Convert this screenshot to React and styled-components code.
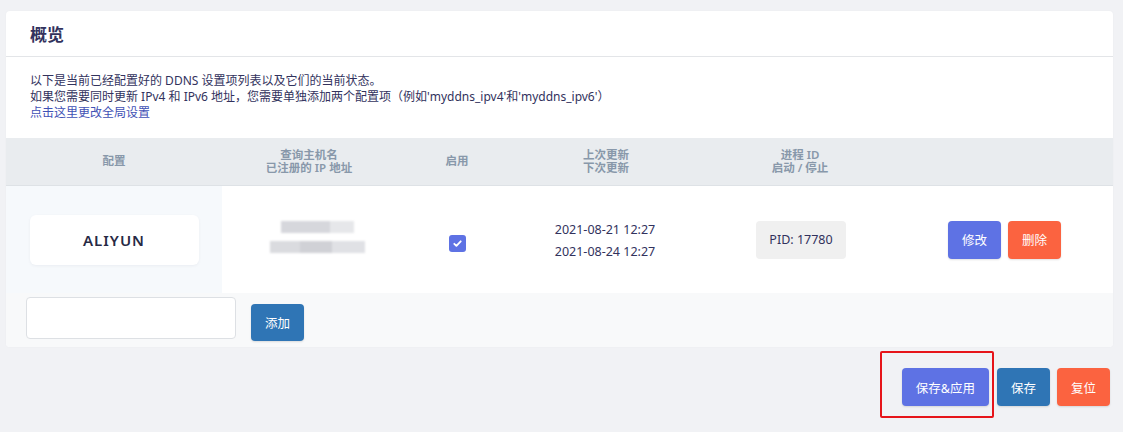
import React from "react";
import styled, { createGlobalStyle } from "styled-components";

const GlobalStyle = createGlobalStyle`
  html, body {
    margin: 0;
    padding: 0;
    background: #f1f2f5;
    font-family: "Noto Sans", "Noto Sans CJK SC", sans-serif;
    color: #32325d;
  }
  * { box-sizing: border-box; }
`;

const Page = styled.div`
  padding: 11px 10px 0 6px;
  width: 1123px;
`;

const Card = styled.div`
  background: #fff;
  border-radius: 4px;
  overflow: hidden;
  box-shadow: 0 0 2px rgba(0, 0, 0, 0.04);
`;

const CardHeader = styled.div`
  height: 46px;
  display: flex;
  align-items: center;
  padding: 0 24px;
  border-bottom: 1px solid #e3e5e8;
`;

const Title = styled.h3`
  margin: 0;
  font-size: 17px;
  font-weight: 700;
  color: #32325d;
`;

const Desc = styled.div`
  padding: 16px 24px 17px;
  font-size: 12px;
  line-height: 16px;
  color: #32325d;
`;

const Link = styled.a`
  color: #3f51b5;
  text-decoration: none;
`;

const Table = styled.div`
  display: grid;
  grid-template-columns: 216px 174px 122px 176px 212px 1fr;
`;

const HeadCell = styled.div`
  height: 48px;
  background: #e9ecef;
  color: #8898aa;
  font-size: 11.5px;
  font-weight: 600;
  line-height: 12.5px;
  display: flex;
  flex-direction: column;
  align-items: center;
  justify-content: center;
  border-bottom: 1px solid #dee2e6;
`;

const Cell = styled.div`
  height: 107px;
  display: flex;
  align-items: center;
  justify-content: center;
  background: ${(p) => (p.$shaded ? "#f6f9fc" : "#fff")};
  flex-direction: ${(p) => (p.$column ? "column" : "row")};
`;

const NameBox = styled.div`
  width: 169px;
  height: 50px;
  background: #fff;
  border-radius: 6px;
  box-shadow: 0 1px 3px rgba(50, 50, 93, 0.06);
  display: flex;
  align-items: center;
  justify-content: center;
  font-size: 15px;
  font-weight: 600;
  letter-spacing: 1px;
  color: #272a45;
`;

const Blurred = styled.div`
  display: flex;
  flex-direction: column;
  align-items: flex-start;
  gap: 8px;
  margin-top: -6px;
  margin-left: 16px;
  filter: blur(1px);
`;

const BlurLine = styled.div`
  display: flex;
  height: 12px;
  margin-left: ${(p) => p.$shift || 0}px;
`;

const BlurSeg = styled.div`
  width: ${(p) => p.$w}px;
  background: ${(p) => p.$c};
`;

const Check = styled.div`
  width: 17px;
  height: 17px;
  border-radius: 3px;
  background: #5e72e4;
  display: flex;
  align-items: center;
  justify-content: center;
  margin-top: 8px;
`;

const DateText = styled.div`
  font-size: 12.5px;
  color: #32325d;
  line-height: 22px;
  margin-left: -2px;
  margin-top: 2px;
`;

const Pid = styled.div`
  width: 90px;
  height: 38px;
  border-radius: 4px;
  background: #f0f0f0;
  display: flex;
  align-items: center;
  justify-content: center;
  font-size: 12.5px;
  color: #32325d;
  margin-left: 2px;
`;

const Actions = styled(Cell)`
  justify-content: flex-start;
  padding-left: 42px;
  gap: 7px;
`;

const colors = {
  primary: "#5e72e4",
  blue: "#2f75b5",
  danger: "#fb6340",
};

const Button = styled.button`
  height: 38px;
  min-width: 53px;
  padding: 0 14px;
  border: none;
  border-radius: 4px;
  background: ${(p) => colors[p.$kind || "primary"]};
  color: #fff;
  font-family: inherit;
  font-size: 12.5px;
  box-shadow: 0 1px 2px rgba(0, 0, 0, 0.12);
  cursor: pointer;
`;

const AddRow = styled.div`
  height: 54px;
  background: #f8f9fa;
  display: flex;
  align-items: center;
  padding: 0 20px;
  gap: 15px;
`;

const Input = styled.input`
  width: 210px;
  height: 42px;
  border: 1px solid #dde0e4;
  border-radius: 4px;
  background: #fff;
  margin-top: -4px;
`;

const AddButton = styled(Button)`
  height: 37px;
  margin-top: 4px;
`;

const Footer = styled.div`
  display: flex;
  justify-content: flex-end;
  align-items: flex-start;
  gap: 7px;
  padding: 21px 3px 26px 0;
`;

const Highlight = styled.div`
  position: relative;
  display: flex;
  margin-right: 1px;
  &::after {
    content: "";
    position: absolute;
    left: -22px;
    right: -5px;
    top: -17px;
    bottom: -12px;
    border: 2px solid #e6141a;
    border-radius: 2px;
    pointer-events: none;
  }
`;

export default function App() {
  return (
    <>
      <GlobalStyle />
      <Page>
        <Card>
          <CardHeader>
            <Title>概览</Title>
          </CardHeader>
          <Desc>
            以下是当前已经配置好的 DDNS 设置项列表以及它们的当前状态。
            <br />
            如果您需要同时更新 IPv4 和 IPv6 地址，您需要单独添加两个配置项（例如'myddns_ipv4'和'myddns_ipv6'）
            <br />
            <Link href="#">点击这里更改全局设置</Link>
          </Desc>
          <Table>
            <HeadCell>配置</HeadCell>
            <HeadCell>
              <span>查询主机名</span>
              <span>已注册的 IP 地址</span>
            </HeadCell>
            <HeadCell>启用</HeadCell>
            <HeadCell>
              <span>上次更新</span>
              <span>下次更新</span>
            </HeadCell>
            <HeadCell>
              <span>进程 ID</span>
              <span>启动 / 停止</span>
            </HeadCell>
            <HeadCell />

            <Cell $shaded>
              <NameBox>ALIYUN</NameBox>
            </Cell>
            <Cell>
              <Blurred>
                <BlurLine $shift={11}>
                  <BlurSeg $w={49} $c="#d6d7dc" />
                  <BlurSeg $w={24} $c="#e6e7ea" />
                </BlurLine>
                <BlurLine>
                  <BlurSeg $w={30} $c="#dadbdf" />
                  <BlurSeg $w={32} $c="#d0d1d6" />
                  <BlurSeg $w={33} $c="#e0e1e5" />
                </BlurLine>
              </Blurred>
            </Cell>
            <Cell>
              <Check>
                <svg width="11" height="11" viewBox="0 0 12 12">
                  <path d="M2.5 6.3l2.3 2.3 4.7-5" fill="none" stroke="#fff" strokeWidth="2" strokeLinecap="round" strokeLinejoin="round" />
                </svg>
              </Check>
            </Cell>
            <Cell $column>
              <DateText>
                2021-08-21 12:27
                <br />
                2021-08-24 12:27
              </DateText>
            </Cell>
            <Cell>
              <Pid>PID: 17780</Pid>
            </Cell>
            <Actions>
              <Button $kind="primary">修改</Button>
              <Button $kind="danger">删除</Button>
            </Actions>
          </Table>
          <AddRow>
            <Input />
            <AddButton $kind="blue">添加</AddButton>
          </AddRow>
        </Card>
        <Footer>
          <Highlight>
            <Button $kind="primary">保存&amp;应用</Button>
          </Highlight>
          <Button $kind="blue">保存</Button>
          <Button $kind="danger">复位</Button>
        </Footer>
      </Page>
    </>
  );
}
